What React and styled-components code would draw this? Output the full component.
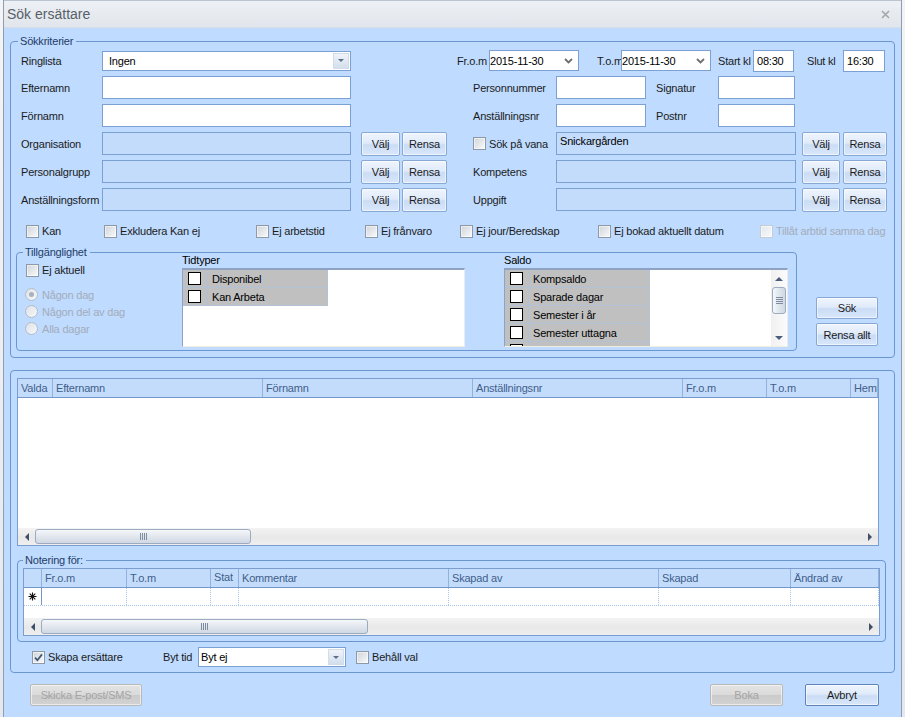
import React from "react";
import styled, { createGlobalStyle } from "styled-components";

const C = {
  bg: "#bfdbff",
  group: "#6b96cf",
  field: "#7ba0d4",
  legend: "#1e3b66",
  text: "#1b1b1b",
  disabled: "#97a2b3",
};

const GlobalStyle = createGlobalStyle`
  *, *::before, *::after { box-sizing: border-box; }
  html, body { margin: 0; padding: 0; }
  body {
    background: #e9ecf0;
    font-family: "Liberation Sans", Arial, sans-serif;
    font-size: 11px;
    letter-spacing: -0.2px;
    color: ${C.text};
  }
`;

const Page = styled.div`
  width: 905px;
  height: 717px;
  overflow: hidden;
  display: flex;
  padding-left: 3px;
  background: linear-gradient(#f4f4f4, #e4e8ee);
`;

const Window = styled.div`
  width: 899px;
  height: 717px;
  flex: none;
  display: flex;
  flex-direction: column;
  background: ${C.bg};
  border-left: 1px solid #8d9db2;
  border-right: 1px solid #8d9db2;
`;

const TitleBar = styled.div`
  height: 28px;
  flex: none;
  display: flex;
  align-items: center;
  justify-content: space-between;
  padding: 0 11px 0 3px;
  background: linear-gradient(#edf0f4, #e1e6ec);
  border-top: 1px solid #b9c4d1;
  border-bottom: 1px solid #d5dde7;
`;

const Title = styled.span`
  font-size: 14px;
  letter-spacing: 0;
  color: #575f69;
`;

const Body = styled.div`
  flex: 1;
  display: flex;
  flex-direction: column;
  padding: 13px 6px 0 6px;
`;

const Group = styled.div`
  position: relative;
  flex: none;
  height: ${(p) => p.$h}px;
  ${(p) => (p.$w ? `width:${p.$w}px;` : "")}
  margin-top: ${(p) => p.$mt || 0}px;
  padding: ${(p) => p.$pad};
  border: 1px solid ${C.group};
  border-radius: 4px;
  display: flex;
  flex-direction: ${(p) => (p.$row ? "row" : "column")};
`;

const Legend = styled.span`
  position: absolute;
  top: -7px;
  left: ${(p) => p.$left ?? 6}px;
  padding: 0 3px 0 2px;
  line-height: 13px;
  background: ${C.bg};
  color: ${C.legend};
`;

const TopArea = styled.div`
  display: flex;
  gap: 10px;
  margin-left: 5px;
`;

const FormGrid = styled.div`
  display: grid;
  grid-template-columns: ${(p) => p.$cols};
  grid-template-rows: 21px repeat(5, 23px);
  row-gap: 5px;
  align-items: center;
`;

const Label = styled.span`
  white-space: nowrap;
  flex: none;
  ${(p) => (p.$w != null ? `width:${p.$w}px;` : "")}
  margin-left: ${(p) => p.$ml || 0}px;
  grid-column: ${(p) => p.$col || "auto"};
  color: ${(p) => (p.$disabled ? C.disabled : C.text)};
`;

const Field = styled.input.attrs({ type: "text", readOnly: true })`
  width: ${(p) => (p.$w ? p.$w + "px" : "100%")};
  height: ${(p) => p.$h || 23}px;
  margin: 0;
  padding: 0 ${(p) => p.$pl ?? 2}px;
  border: 1px solid ${C.field};
  background: #fff;
  font: inherit;
  letter-spacing: inherit;
  color: #000;
  outline: none;
  flex: none;
  align-self: ${(p) => (p.$top ? "start" : "auto")};
`;

const ReadBox = styled.div`
  height: 23px;
  width: 100%;
  grid-column: ${(p) => p.$col || "auto"};
  border: 1px solid ${C.field};
  background: #c4dcfc;
  padding: 2px 3px 0;
  line-height: 13px;
  color: #000;
`;

const Combo = styled.div`
  width: ${(p) => p.$w}px;
  height: 20px;
  flex: none;
  display: flex;
  align-items: center;
  border: 1px solid ${C.field};
  background: #fff;
  padding: 1px;
`;

const ComboText = styled.span`
  flex: 1;
  padding-left: ${(p) => p.$pl ?? 5}px;
  color: #000;
`;

const DropBtn = styled.span`
  width: 16px;
  height: 16px;
  flex: none;
  display: flex;
  align-items: center;
  justify-content: center;
  background: linear-gradient(#f0f4f9, #d2deec);
  border: 1px solid #d3dde9;
`;

const DateBox = styled.div`
  width: 90px;
  height: 21px;
  flex: none;
  display: flex;
  align-items: center;
  justify-content: space-between;
  border: 1px solid ${C.field};
  background: #fff;
  padding: 0 5px 0 0;
  color: #000;
`;

const SubRow = styled.div`
  grid-column: ${(p) => p.$col};
  display: flex;
  align-items: center;
  height: 100%;
`;

const ButtonPair = styled.div`
  display: flex;
  gap: ${(p) => p.$gap}px;
  padding-left: ${(p) => p.$pad}px;
`;

const Btn = styled.button`
  width: ${(p) => p.$w}px;
  height: ${(p) => p.$h || 24}px;
  flex: none;
  margin: 0 0 0 ${(p) => p.$ml || 0}px;
  padding: 0;
  font: inherit;
  letter-spacing: inherit;
  color: ${(p) => (p.disabled ? "#a5a5a5" : "#1b1b1b")};
  border: 1px solid
    ${(p) => (p.disabled ? "#b9b9b9" : p.$primary ? "#5f84ba" : "#88a8d4")};
  border-radius: 2px;
  background: ${(p) =>
    p.disabled
      ? "linear-gradient(#e4e4e4, #dadada 48%, #cbcbcb 52%, #d2d2d2)"
      : "linear-gradient(#f0f5fd, #dfeafa 46%, #cadcf5 54%, #d9e7fa)"};
  box-shadow: inset 0 0 0 1px rgba(255, 255, 255, 0.55);
  cursor: default;
`;

const CheckRow = styled.div`
  display: flex;
  align-items: center;
  height: 14px;
  margin: 13px 0 0 10px;
`;

const CheckItem = styled.label`
  display: flex;
  align-items: center;
  gap: ${(p) => p.$gap ?? 3}px;
  flex: none;
  ${(p) => (p.$w ? `width:${p.$w}px;` : "")}
  height: ${(p) => p.$h || 14}px;
  margin-left: ${(p) => p.$ml || 0}px;
  margin-top: ${(p) => p.$mt || 0}px;
  grid-column: ${(p) => p.$col || "auto"};
  color: ${(p) => (p.$disabled ? "#a3acb9" : C.text)};
  white-space: nowrap;
`;

const Box = styled.span`
  width: 13px;
  height: 13px;
  flex: none;
  display: flex;
  align-items: center;
  justify-content: center;
  border: 1px solid ${(p) => (p.$disabled ? "#c6ccd4" : "#8e99a7")};
  background: ${(p) =>
    p.$disabled
      ? "linear-gradient(135deg,#e4e8ec,#f7f8f9)"
      : "linear-gradient(135deg,#d0d4d9,#f9fafb)"};
  box-shadow: inset 0 0 0 1px rgba(255, 255, 255, 0.5);
`;

const RadioDot = styled.span`
  width: 13px;
  height: 13px;
  border-radius: 50%;
  flex: none;
  display: flex;
  align-items: center;
  justify-content: center;
  border: 1px solid #b4bdc9;
  background: linear-gradient(135deg, #dde2e8, #f7f8f9);
  &::after {
    content: "";
    width: 5px;
    height: 5px;
    border-radius: 50%;
    background: #a7b1be;
    display: ${(p) => (p.$on ? "block" : "none")};
  }
`;

const LowerArea = styled.div`
  display: flex;
  align-items: flex-start;
  margin-top: 14px;
`;

const Column = styled.div`
  width: ${(p) => p.$w}px;
  flex: none;
  display: flex;
  flex-direction: column;
  margin-left: ${(p) => p.$ml || 0}px;
  margin-top: ${(p) => p.$mt || 0}px;
  gap: ${(p) => p.$gap || 0}px;
`;

const ListLabel = styled.span`
  line-height: 14px;
  color: #000;
`;

const ListBox = styled.div`
  height: 79px;
  margin-top: 1px;
  display: flex;
  background: #fff;
  overflow: hidden;
  border-top: 2px solid #8ea3c1;
  border-left: 1px solid #8ea3c1;
  border-right: 1px solid #e9ecf0;
  border-bottom: 1px solid #f1efe2;
`;

const Rows = styled.div`
  flex: 1;
  display: flex;
  flex-direction: column;
  overflow: hidden;
`;

const ListRow = styled.div`
  width: 145px;
  height: 18px;
  flex: none;
  display: flex;
  background: #c0c0c0;
  border-bottom: 1px dotted #a4c2ea;
  border-right: 1px dotted #a4c2ea;
`;

const CheckCell = styled.span`
  width: ${(p) => p.$w}px;
  flex: none;
  display: flex;
  align-items: center;
  padding-left: 5px;
  border-right: 1px dotted #a4c2ea;
`;

const WhiteBox = styled.span`
  width: 13px;
  height: 13px;
  border: 1px solid #000;
  background: #fff;
`;

const TextCell = styled.span`
  padding-left: 4px;
  display: flex;
  align-items: center;
  color: #000;
`;

const VScroll = styled.div`
  width: 16px;
  flex: none;
  display: flex;
  flex-direction: column;
  background: linear-gradient(90deg, #f0f0f0, #fbfbfb);
`;

const Arrow = styled.span`
  width: ${(p) => p.$w || 17}px;
  height: 17px;
  flex: none;
  display: flex;
  align-items: center;
  justify-content: center;
`;

const VThumb = styled.span`
  height: 27px;
  flex: none;
  margin: 0 1px;
  border: 1px solid #9aabc2;
  border-radius: 3px;
  background: linear-gradient(90deg, #f5f7fa, #e0e6ee 50%, #d0d8e3);
  display: flex;
  align-items: center;
  justify-content: center;
`;

const VGrip = styled.span`
  width: 7px;
  height: 7px;
  background: repeating-linear-gradient(
    180deg,
    #7e8ca2 0 1px,
    transparent 1px 2px
  );
`;

const Spacer = styled.span`
  flex: 1;
`;

const SideButtons = styled.div`
  display: flex;
  flex-direction: column;
  gap: 4px;
  margin: 45px 0 0 19px;
`;

const Grid = styled.div`
  width: ${(p) => p.$w}px;
  height: ${(p) => p.$h}px;
  flex: none;
  display: flex;
  flex-direction: column;
  overflow: hidden;
  border: 1px solid #7b9dcf;
  background: #fff;
`;

const HeaderRow = styled.div`
  height: 19px;
  flex: none;
  display: flex;
  background: #c4dcfb;
  border-bottom: 1px solid #7397cc;
`;

const HeadCell = styled.div`
  ${(p) => (p.$w ? `width:${p.$w}px; flex:none;` : "flex:1;")}
  overflow: hidden;
  padding: ${(p) => (p.$top ? "2px 2px 0 3px" : "0 2px 0 3px")};
  display: flex;
  align-items: ${(p) => (p.$top ? "flex-start" : "center")};
  white-space: ${(p) => (p.$top ? "normal" : "nowrap")};
  word-break: break-all;
  line-height: 13px;
  border-right: 1px solid #92b2de;
  color: #3f5f8b;
`;

const DataRow = styled.div`
  height: 18px;
  flex: none;
  display: flex;
  border-bottom: 1px dotted #a9c6ea;
`;

const DataCell = styled.div`
  ${(p) => (p.$w ? `width:${p.$w}px; flex:none;` : "flex:1;")}
  border-right: 1px dotted #a9c6ea;
`;

const RowHead = styled.div`
  width: ${(p) => p.$w}px;
  flex: none;
  display: flex;
  align-items: center;
  justify-content: center;
  background: #fff;
  border-right: 1px solid #7397cc;
`;

const GridBody = styled.div`
  flex: 1;
  background: #fff;
`;

const HScrollBar = styled.div`
  height: 17px;
  flex: none;
  display: flex;
  align-items: center;
  background: linear-gradient(#f3f3f3, #e8e8e8 55%, #efefef);
`;

const HThumb = styled.span`
  width: ${(p) => p.$w}px;
  height: 15px;
  flex: none;
  border: 1px solid #9aabc2;
  border-radius: 3px;
  background: linear-gradient(#f5f7fa, #e2e7ee 50%, #d1d8e3);
  display: flex;
  align-items: center;
  justify-content: center;
`;

const HGrip = styled.span`
  width: 7px;
  height: 7px;
  background: repeating-linear-gradient(
    90deg,
    #7e8ca2 0 1px,
    transparent 1px 2px
  );
`;

const BottomRow = styled.div`
  display: flex;
  align-items: center;
  height: 20px;
  margin: 5px 0 0 15px;
`;

const Footer = styled.div`
  display: flex;
  align-items: center;
  margin-top: 11px;
  padding: 0 16px 0 20px;
`;

/* ---------- small drawings ---------- */

const Tri = ({ dir = "down", color = "#5c6f8c", size = 4 }) => {
  const s = size;
  const pts = {
    down: `0,0 ${2 * s},0 ${s},${s}`,
    up: `0,${s} ${2 * s},${s} ${s},0`,
    left: `${s},0 ${s},${2 * s} 0,${s}`,
    right: `0,0 0,${2 * s} ${s},${s}`,
  }[dir];
  const horiz = dir === "left" || dir === "right";
  return (
    <svg
      width={horiz ? s : 2 * s}
      height={horiz ? 2 * s : s}
      viewBox={`0 0 ${horiz ? s : 2 * s} ${horiz ? 2 * s : s}`}
    >
      <polygon points={pts} fill={color} />
    </svg>
  );
};

const Chevron = () => (
  <svg width="9" height="6" viewBox="0 0 9 6">
    <path d="M1 1 L4.5 4.5 L8 1" stroke="#6e6e6e" strokeWidth="1.8" fill="none" />
  </svg>
);

const CloseIcon = () => (
  <svg width="9" height="9" viewBox="0 0 9 9">
    <path d="M1 1 L8 8 M8 1 L1 8" stroke="#a8a8a8" strokeWidth="1.7" />
  </svg>
);

const Asterisk = () => (
  <svg width="9" height="9" viewBox="0 0 9 9">
    <path
      d="M4.5 0.5 V8.5 M0.5 4.5 H8.5 M1.7 1.7 L7.3 7.3 M7.3 1.7 L1.7 7.3"
      stroke="#111"
      strokeWidth="1.1"
    />
  </svg>
);

const Check = ({ checked, disabled, children, ...rest }) => (
  <CheckItem $disabled={disabled} {...rest}>
    <Box $disabled={disabled}>
      {checked && (
        <svg width="9" height="9" viewBox="0 0 9 9">
          <path d="M1 4.6 L3.4 7.2 L8 1.4" stroke="#3f5576" strokeWidth="1.7" fill="none" />
        </svg>
      )}
    </Box>
    {children}
  </CheckItem>
);

const Radio = ({ on, children }) => (
  <CheckItem $disabled $gap={4} $h={17} $ml={-1}>
    <RadioDot $on={on} />
    {children}
  </CheckItem>
);

const HScroll = ({ thumb }) => (
  <HScrollBar>
    <Arrow>
      <Tri dir="left" color="#3f4f6b" />
    </Arrow>
    <HThumb $w={thumb}>
      <HGrip />
    </HThumb>
    <Spacer />
    <Arrow>
      <Tri dir="right" color="#3f4f6b" />
    </Arrow>
  </HScrollBar>
);

const ListItems = ({ items, check }) =>
  items.map((t, i) => (
    <ListRow key={i}>
      <CheckCell $w={check}>
        <WhiteBox />
      </CheckCell>
      <TextCell>{t}</TextCell>
    </ListRow>
  ));

const ValjRensa = ({ col, pad, gap, w1, w2 }) => (
  <ButtonPair $pad={pad} $gap={gap} style={col ? { gridColumn: col } : undefined}>
    <Btn $w={w1}>Välj</Btn>
    <Btn $w={w2}>Rensa</Btn>
  </ButtonPair>
);

const grid1Cols = [
  { t: "Valda", w: 35 },
  { t: "Efternamn", w: 210 },
  { t: "Förnamn", w: 210 },
  { t: "Anställningsnr", w: 210 },
  { t: "Fr.o.m", w: 84 },
  { t: "T.o.m", w: 84 },
  { t: "Hemtelefon" },
];

const grid2Cols = [
  { t: "Fr.o.m", w: 85 },
  { t: "T.o.m", w: 84 },
  { t: "Status", w: 28, top: true },
  { t: "Kommentar", w: 210 },
  { t: "Skapad av", w: 210 },
  { t: "Skapad", w: 132 },
  { t: "Ändrad av" },
];

export default function App() {
  return (
    <>
      <GlobalStyle />
      <Page>
        <Window>
          <TitleBar>
            <Title>Sök ersättare</Title>
            <CloseIcon />
          </TitleBar>
          <Body>
            <Group $h={317} $pad="8px 7px 6px 5px">
              <Legend $left={7}>Sökkriterier</Legend>
              <TopArea>
                <FormGrid $cols="81px 249px 96px">
                  <Label>Ringlista</Label>
                  <Combo $w={249}>
                    <ComboText>Ingen</ComboText>
                    <DropBtn>
                      <Tri size={3} />
                    </DropBtn>
                  </Combo>
                  <span />

                  <Label>Efternamn</Label>
                  <Field />
                  <span />

                  <Label>Förnamn</Label>
                  <Field />
                  <span />

                  <Label>Organisation</Label>
                  <ReadBox />
                  <ValjRensa pad={10} gap={2} w1={39} w2={45} />

                  <Label>Personalgrupp</Label>
                  <ReadBox />
                  <ValjRensa pad={10} gap={2} w1={39} w2={45} />

                  <Label>Anställningsform</Label>
                  <ReadBox />
                  <ValjRensa pad={10} gap={2} w1={39} w2={45} />
                </FormGrid>

                <FormGrid $cols="16px 83px 240px 91px">
                  <SubRow $col="1 / -1">
                    <Label $w={32}>Fr.o.m</Label>
                    <DateBox>
                      2015-11-30
                      <Chevron />
                    </DateBox>
                    <Label $w={24} $ml={18}>
                      T.o.m
                    </Label>
                    <DateBox>
                      2015-11-30
                      <Chevron />
                    </DateBox>
                    <Label $w={35} $ml={7}>
                      Start kl
                    </Label>
                    <Field $w={41} $h={22} $pl={3} $top defaultValue="08:30" />
                    <Label $w={36} $ml={13}>
                      Slut kl
                    </Label>
                    <Field $w={42} $h={22} $pl={3} $top defaultValue="16:30" />
                  </SubRow>

                  <Label $col="2">Personnummer</Label>
                  <SubRow $col="3 / 5">
                    <Field $w={90} />
                    <Label $w={62} $ml={10}>
                      Signatur
                    </Label>
                    <Field $w={77} />
                  </SubRow>

                  <Label $col="2">Anställningsnr</Label>
                  <SubRow $col="3 / 5">
                    <Field $w={90} />
                    <Label $w={62} $ml={10}>
                      Postnr
                    </Label>
                    <Field $w={77} />
                  </SubRow>

                  <Check $col="2">Sök på vana</Check>
                  <ReadBox $col="3">Snickargården</ReadBox>
                  <ValjRensa col="4" pad={6} gap={3} w1={38} w2={44} />

                  <Label $col="2">Kompetens</Label>
                  <ReadBox $col="3" />
                  <ValjRensa col="4" pad={6} gap={3} w1={38} w2={44} />

                  <Label $col="2">Uppgift</Label>
                  <ReadBox $col="3" />
                  <ValjRensa col="4" pad={6} gap={3} w1={38} w2={44} />
                </FormGrid>
              </TopArea>

              <CheckRow>
                <Check $w={78}>Kan</Check>
                <Check $w={152}>Exkludera Kan ej</Check>
                <Check $w={109}>Ej arbetstid</Check>
                <Check $w={95}>Ej frånvaro</Check>
                <Check $w={138}>Ej jour/Beredskap</Check>
                <Check $w={162}>Ej bokad aktuellt datum</Check>
                <Check disabled>Tillåt arbtid samma dag</Check>
              </CheckRow>

              <LowerArea>
                <Group $h={99} $w={781} $row $pad="0 8px 0 9px">
                  <Legend $left={6}>Tillgänglighet</Legend>
                  <Column $w={156}>
                    <Check $mt={10}>Ej aktuell</Check>
                    <Column $w={156} $mt={9}>
                      <Radio on>Någon dag</Radio>
                      <Radio>Någon del av dag</Radio>
                      <Radio>Alla dagar</Radio>
                    </Column>
                  </Column>
                  <Column $w={283}>
                    <ListLabel>Tidtyper</ListLabel>
                    <ListBox>
                      <Rows>
                        <ListItems check={25} items={["Disponibel", "Kan Arbeta"]} />
                      </Rows>
                    </ListBox>
                  </Column>
                  <Column $w={284} $ml={39}>
                    <ListLabel>Saldo</ListLabel>
                    <ListBox>
                      <Rows>
                        <ListItems
                          check={24}
                          items={[
                            "Kompsaldo",
                            "Sparade dagar",
                            "Semester i år",
                            "Semester uttagna",
                            "",
                          ]}
                        />
                      </Rows>
                      <VScroll>
                        <Arrow $w={16}>
                          <Tri dir="up" color="#4b5d7b" />
                        </Arrow>
                        <VThumb>
                          <VGrip />
                        </VThumb>
                        <Spacer />
                        <Arrow $w={16}>
                          <Tri dir="down" color="#4b5d7b" />
                        </Arrow>
                      </VScroll>
                    </ListBox>
                  </Column>
                </Group>
                <SideButtons>
                  <Btn $w={62} $h={22}>
                    Sök
                  </Btn>
                  <Btn $w={62} $h={23}>
                    Rensa allt
                  </Btn>
                </SideButtons>
              </LowerArea>
            </Group>

            <Group $mt={12} $h={303} $pad="7px 0 5px 6px">
              <Grid $w={862} $h={168}>
                <HeaderRow>
                  {grid1Cols.map((c) => (
                    <HeadCell key={c.t} $w={c.w}>
                      {c.t}
                    </HeadCell>
                  ))}
                </HeaderRow>
                <GridBody />
                <HScroll thumb={216} />
              </Grid>

              <Group $mt={14} $w={869} $h={82} $pad="7px 5px 5px 5px">
                <Legend $left={5}>Notering för:</Legend>
                <Grid $w={857} $h={68}>
                  <HeaderRow>
                    <HeadCell $w={18} />
                    {grid2Cols.map((c) => (
                      <HeadCell key={c.t} $w={c.w} $top={c.top}>
                        {c.t}
                      </HeadCell>
                    ))}
                  </HeaderRow>
                  <DataRow>
                    <RowHead $w={18}>
                      <Asterisk />
                    </RowHead>
                    {grid2Cols.map((c) => (
                      <DataCell key={c.t} $w={c.w} />
                    ))}
                  </DataRow>
                  <GridBody />
                  <HScroll thumb={327} />
                </Grid>
              </Group>

              <BottomRow>
                <Check $w={131} checked>
                  Skapa ersättare
                </Check>
                <Label $w={35}>Byt tid</Label>
                <Combo $w={148}>
                  <ComboText $pl={1}>Byt ej</ComboText>
                  <DropBtn>
                    <Tri size={3} />
                  </DropBtn>
                </Combo>
                <Check $ml={10}>Behåll val</Check>
              </BottomRow>
            </Group>

            <Footer>
              <Btn $w={112} $h={22} disabled>
                Skicka E-post/SMS
              </Btn>
              <Spacer />
              <Btn $w={73} $h={22} disabled>
                Boka
              </Btn>
              <Btn $w={74} $h={22} $ml={22} $primary>
                Avbryt
              </Btn>
            </Footer>
          </Body>
        </Window>
      </Page>
    </>
  );
}
